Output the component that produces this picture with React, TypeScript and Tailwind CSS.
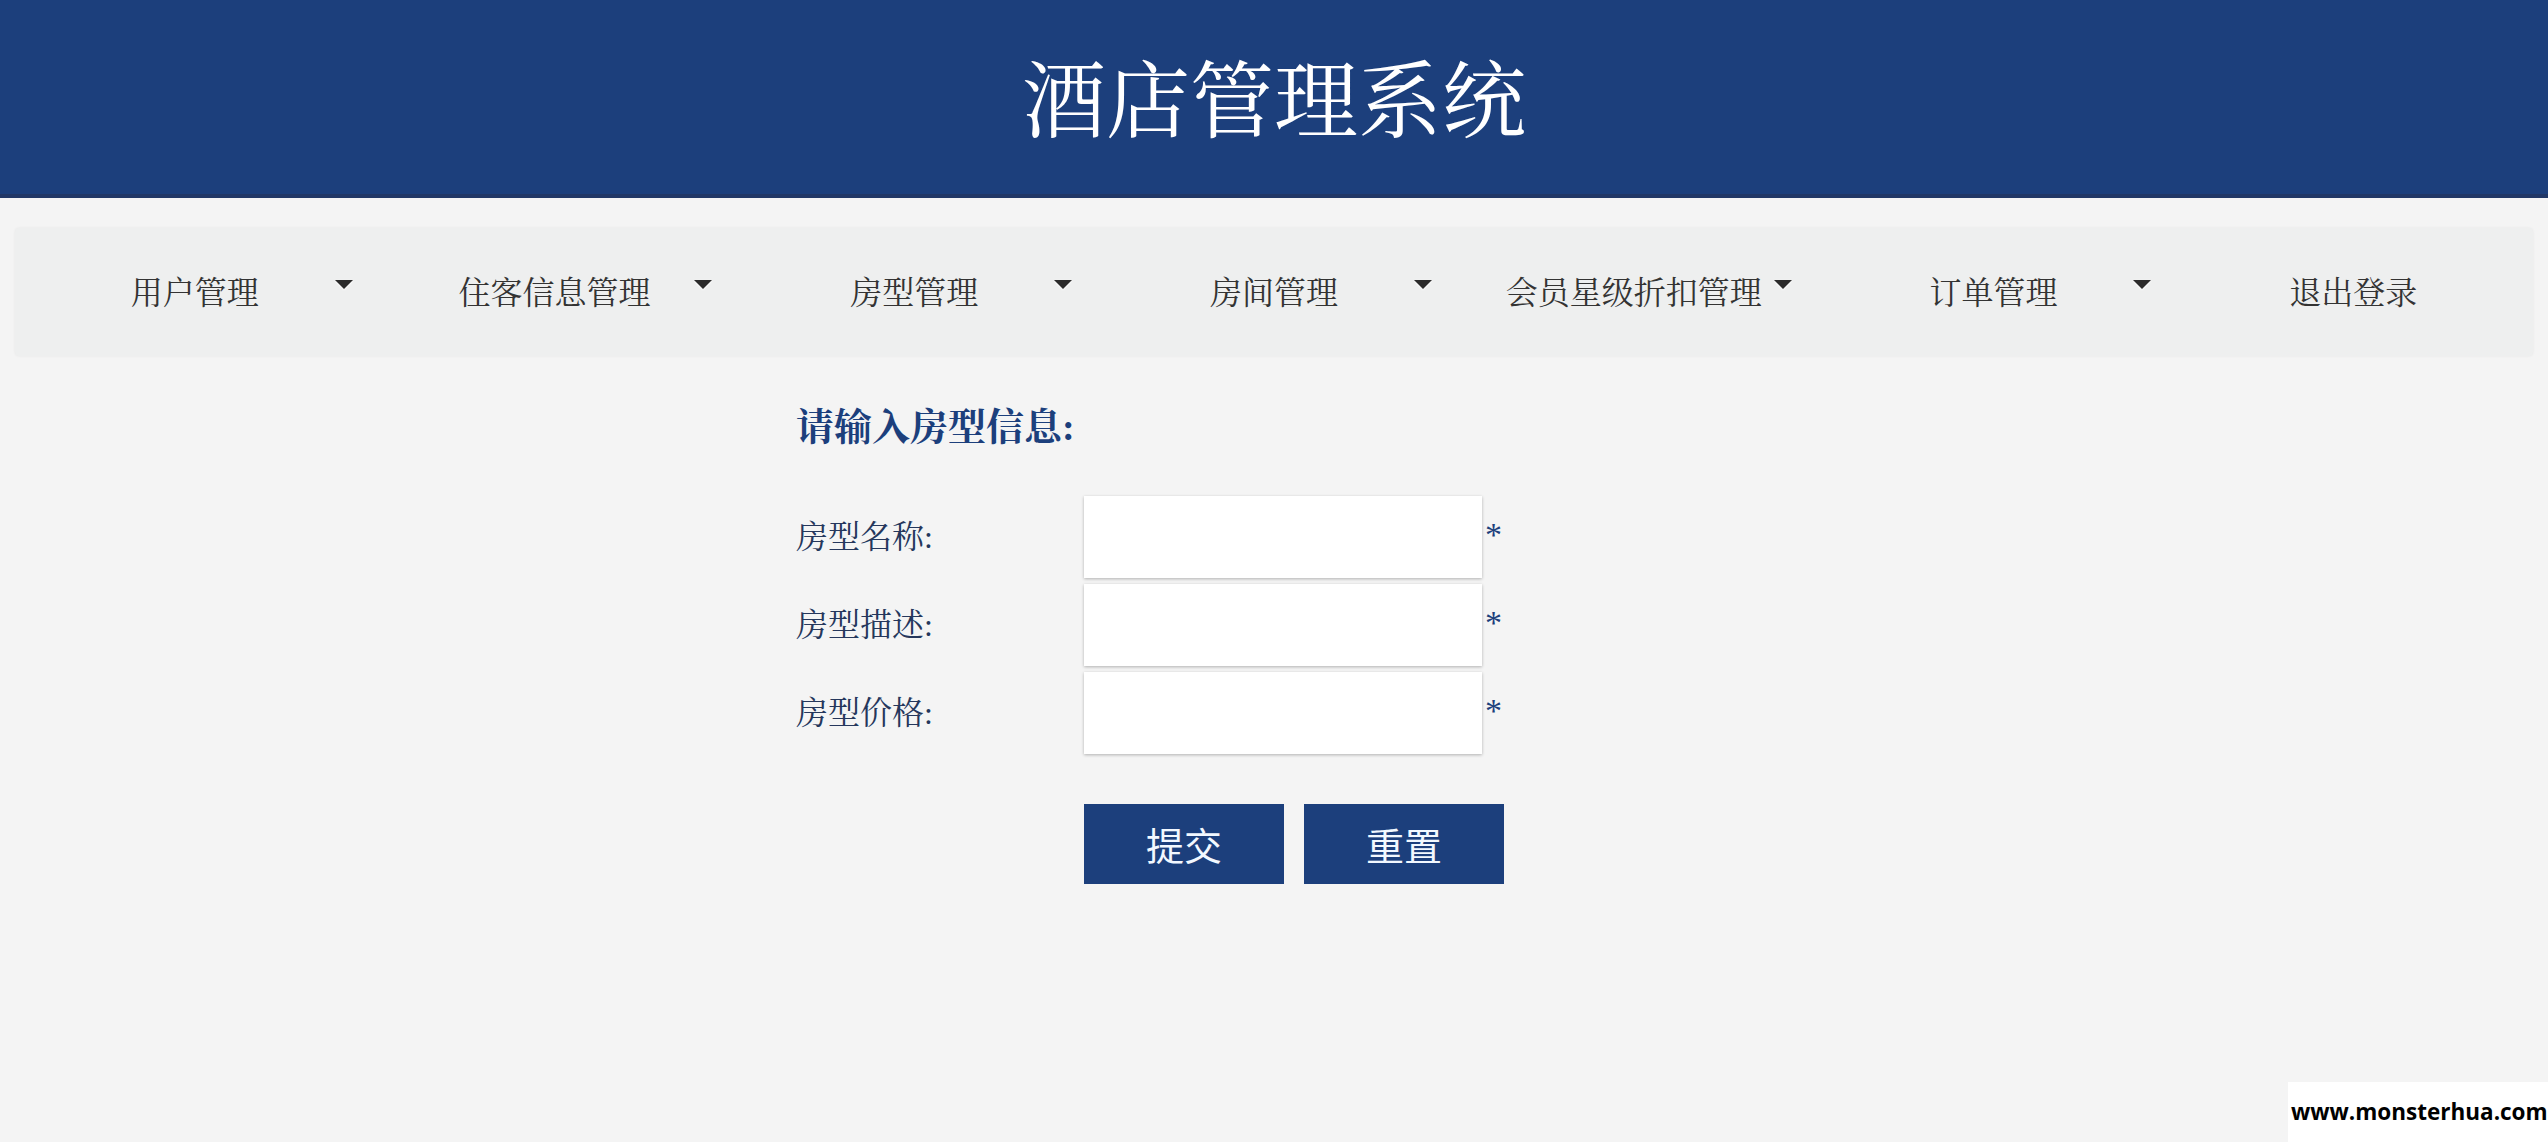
import React from "react";

const serif = { fontFamily: '"Liberation Serif", "Noto Serif CJK SC", "Noto Sans CJK SC", serif' };
const sans = { fontFamily: '"Noto Sans CJK SC", "Noto Sans", sans-serif' };

const navItems: { label: string; caret: boolean }[] = [
  { label: "用户管理", caret: true },
  { label: "住客信息管理", caret: true },
  { label: "房型管理", caret: true },
  { label: "房间管理", caret: true },
  { label: "会员星级折扣管理", caret: true },
  { label: "订单管理", caret: true },
  { label: "退出登录", caret: false },
];

function Caret() {
  return (
    <span className="absolute top-[52px] right-[22px] w-0 h-0 border-l-[9px] border-r-[9px] border-t-[9px] border-l-transparent border-r-transparent border-t-[#2b2b2b] [filter:drop-shadow(0_1px_1px_#ffffff)]" />
  );
}

function Row({ label }: { label: string }) {
  return (
    <div className="flex items-center">
      <div className="w-[288px] text-[32px] leading-none text-[#25375c]" style={serif}>
        {label}
      </div>
      <input
        type="text"
        className="w-[398px] h-[82px] bg-white border-0 outline-none shadow-[0_1px_3px_rgba(0,0,0,0.28)]"
      />
      <span className="self-start mt-[22px] ml-[3px] text-[34px] leading-none text-[#1c3f7c]" style={serif}>
        *
      </span>
    </div>
  );
}

export default function App() {
  return (
    <div className="min-h-[1142px] bg-[#f4f4f4] relative" style={serif}>
      <header className="h-[198px] bg-[#1c3f7c] border-b-[4px] border-[#213766] flex items-center justify-center">
        <h1 className="text-[84px] leading-none text-white mt-[12px]" style={serif}>
          酒店管理系统
        </h1>
      </header>

      <nav className="mx-[15px] mt-[30px] h-[128px] bg-[#eeefef] rounded-[4px] shadow-[0_0_3px_rgba(0,0,0,0.06)] grid grid-cols-7">
        {navItems.map((it) => (
          <div key={it.label} className="relative flex items-center justify-center">
            <span className="text-[32px] leading-none text-[#333333] mt-[2px]" style={serif}>
              {it.label}
            </span>
            {it.caret && <Caret />}
          </div>
        ))}
      </nav>

      <main className="w-[960px] mx-auto pt-[52px]">
        <h2 className="text-[38px] leading-none font-bold text-[#1c3f7c] pl-[2px]" style={serif}>
          请输入房型信息:
        </h2>
        <div className="mt-[50px] pl-[2px] flex flex-col gap-[6px]">
          <Row label="房型名称:" />
          <Row label="房型描述:" />
          <Row label="房型价格:" />
        </div>
        <div className="mt-[50px] ml-[290px] flex gap-[20px]">
          <button className="w-[200px] h-[80px] bg-[#1c3f7c] text-[#f2f8ff] text-[38px] leading-none" style={sans}>
            提交
          </button>
          <button className="w-[200px] h-[80px] bg-[#1c3f7c] text-[#f2f8ff] text-[38px] leading-none" style={sans}>
            重置
          </button>
        </div>
      </main>

      <div className="absolute right-0 bottom-0 w-[260px] h-[60px] bg-white flex items-center pl-[3px]">
        <span className="text-[22.5px] font-bold text-black whitespace-nowrap" style={{ fontFamily: '"Open Sans", "Noto Sans", sans-serif' }}>
          www.monsterhua.com
        </span>
      </div>
    </div>
  );
}
